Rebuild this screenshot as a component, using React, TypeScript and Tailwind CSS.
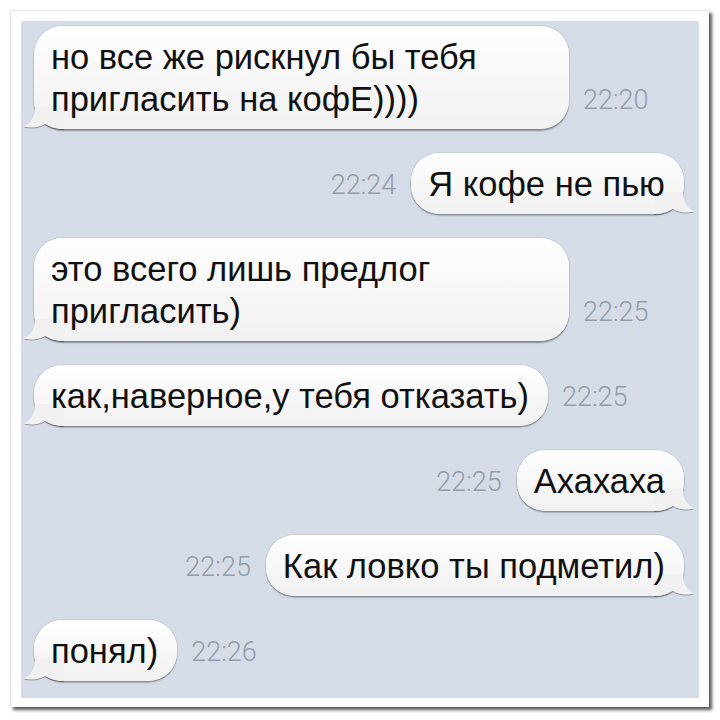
import React from "react";

type Msg = { side: "l" | "r"; lines: string[]; time: string; wide?: boolean };

const msgs: Msg[] = [
  { side: "l", lines: ["но все же рискнул бы тебя", "пригласить на кофЕ))))"], time: "22:20", wide: true },
  { side: "r", lines: ["Я кофе не пью"], time: "22:24" },
  { side: "l", lines: ["это всего лишь предлог", "пригласить)"], time: "22:25", wide: true },
  { side: "l", lines: ["как,наверное,у тебя отказать)"], time: "22:25" },
  { side: "r", lines: ["Ахахаха"], time: "22:25" },
  { side: "r", lines: ["Как ловко ты подметил)"], time: "22:25" },
  { side: "l", lines: ["понял)"], time: "22:26" },
];

function Tail({ side }: { side: "l" | "r" }) {
  return (
    <svg
      width="40"
      height="22"
      viewBox="0 0 40 22"
      className={
        "absolute bottom-0 drop-shadow-[0_1.2px_0_rgba(0,0,0,0.3)] " +
        (side === "l" ? "left-[-10px]" : "right-[-10px] scale-x-[-1]")
      }
    >
      <path
        d="M11 0 C11 9 8 15 0 19.5 C8 21.5 16 20.5 21 17 C26 20 32 22 40 22 L40 0 Z"
        fill="#f1f1f1"
      />
    </svg>
  );
}

function Bubble({ m }: { m: Msg }) {
  return (
    <div
      className={
        "relative rounded-[28px] bg-gradient-to-b from-[#fefefe] to-[#f1f1f1] pl-[17px] pr-[19px] py-[9.5px] shadow-[0_0_0_0.5px_rgba(0,0,0,0.12),0_1.5px_1.5px_rgba(0,0,0,0.35)] " +
        (m.wide ? "w-[535px]" : "")
      }
    >
      <Tail side={m.side} />
      <div className="relative z-10 font-['Liberation_Sans',Arial,sans-serif] text-[34.5px] leading-[42px] text-[#111] whitespace-nowrap">
        {m.lines.map((l, i) => (
          <div key={i}>{l}</div>
        ))}
      </div>
    </div>
  );
}

function Time({ t }: { t: string }) {
  return (
    <div className="mb-[14px] font-['Roboto',sans-serif] font-light text-[27px] leading-[30px] text-[#939cab]">
      {t}
    </div>
  );
}

export default function App() {
  return (
    <div className="w-[720px] h-[720px] bg-white pt-[10px] pl-[10px]">
      <div className="w-[699px] h-[697px] bg-white p-[10px] pb-[9px] border-l border-t border-[#e4e4e4] shadow-[3px_3px_3px_rgba(0,0,0,0.65)] flex">
        <div className="flex-1 bg-[#d5dce7] flex flex-col gap-[24px] pt-[5px] pl-[13px] pr-[15px]">
          {msgs.map((m, i) =>
            m.side === "l" ? (
              <div key={i} className="flex items-end gap-[14px]">
                <Bubble m={m} />
                <Time t={m.time} />
              </div>
            ) : (
              <div key={i} className="flex items-end justify-end gap-[15px]">
                <Time t={m.time} />
                <Bubble m={m} />
              </div>
            )
          )}
        </div>
      </div>
    </div>
  );
}
